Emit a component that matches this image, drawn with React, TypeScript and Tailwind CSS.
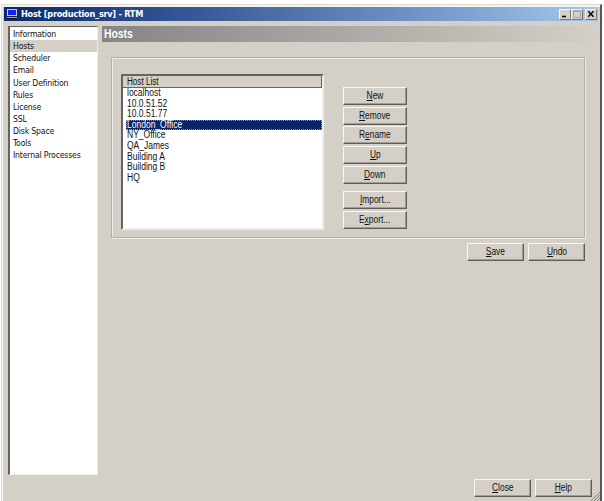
import type { ReactNode } from "react";

const sections = [
  "Information",
  "Hosts",
  "Scheduler",
  "Email",
  "User Definition",
  "Rules",
  "License",
  "SSL",
  "Disk Space",
  "Tools",
  "Internal Processes",
];

const hosts = [
  "localhost",
  "10.0.51.52",
  "10.0.51.77",
  "London_Office",
  "NY_Office",
  "QA_James",
  "Building A",
  "Building B",
  "HQ",
];

const raised =
  "border border-t-[#f8f7f2] border-l-[#f8f7f2] border-b-[#5f5d58] border-r-[#5f5d58] shadow-[inset_-1px_-1px_0_#a09d96] bg-[#d4d0c8]";

function Button({ label, hot = 0, className = "" }: { label: string; hot?: number; className?: string }) {
  return (
    <button
      className={`${raised} flex shrink-0 items-center justify-center whitespace-nowrap text-[10px] leading-[14px] ${className}`}
    >
      <span className="inline-block scale-x-[.84]">
        {label.slice(0, hot)}
        <span className="underline decoration-1 underline-offset-1">{label[hot]}</span>
        {label.slice(hot + 1)}
      </span>
    </button>
  );
}

function CaptionButton({ children, className = "" }: { children: ReactNode; className?: string }) {
  return (
    <button
      className={`flex h-[11px] w-3 items-center justify-center border border-t-[#f8f7f2] border-l-[#f8f7f2] border-r-[#77756f] border-b-[#77756f] bg-[#d4d0c8] ${className}`}
    >
      <svg width="8" height="8" viewBox="0 0 8 8" fill="none">
        {children}
      </svg>
    </button>
  );
}

export default function App() {
  return (
    <div className="h-[501px] w-[604px] overflow-hidden bg-white pt-1 pl-px font-['Liberation_Sans',Arial,sans-serif] text-[#111]">
      <div className="relative flex h-[497px] w-[601px] flex-col border-t border-r-2 border-l border-t-[#dedbd5] border-r-[#56565a] border-l-[#dedbd5] bg-[#d4d0c8]">
        <div className="flex h-full flex-col border-t-2 border-l border-[#f4f3ef] pr-[2px] pl-px">
          <header className="flex h-[14px] shrink-0 items-center bg-linear-to-r from-[#0b276e] to-[#a3c7ed] pl-[2px]">
            <svg width="12" height="12" viewBox="0 0 12 12" shapeRendering="crispEdges">
              <rect x="1" y="1" width="10" height="7" fill="#c5ccd5" />
              <rect x="2" y="2" width="8" height="5" fill="#1020ff" />
              <rect x="3" y="8" width="6" height="1" fill="#222" />
              <rect x="1" y="9" width="10" height="2" fill="#a5a6a4" />
              <rect x="1" y="10" width="10" height="1" fill="#111" />
            </svg>
            <h1 className="ml-[3px] origin-left scale-x-[.955] whitespace-nowrap font-['DejaVu_Sans_Condensed','DejaVu_Sans',sans-serif] text-[9.5px] leading-[14px] font-bold tracking-[-0.25px] text-white">
              Host [production_srv] - RTM
            </h1>
            <div className="ml-auto flex pr-px">
              <CaptionButton>
                <path d="M1 6.5H5" stroke="#000" strokeWidth="1.6" />
              </CaptionButton>
              <CaptionButton>
                <path d="M.5 .5H7.5V7.5H.5Z M.5 1.5H7.5" stroke="#aaa9a2" />
              </CaptionButton>
              <CaptionButton className="ml-[2px]">
                <path d="M1.3 1.2L6.5 6.8M6.5 1.2L1.3 6.8" stroke="#000" strokeWidth="1.4" />
              </CaptionButton>
            </div>
          </header>

          <div className="flex min-h-0 flex-1 pt-[5px] pl-1">
            <nav className="h-[449px] w-[90px] shrink-0 border-t border-r border-b border-l-2 border-t-[#66645f] border-r-[#f1f0ec] border-b-[#f1f0ec] border-l-[#66645f] bg-white pt-[1px] font-['DejaVu_Sans_Condensed','DejaVu_Sans',sans-serif] text-[9px]">
              {sections.map((name) => (
                <div
                  key={name}
                  className={`flex h-[12.15px] items-center pl-[3px] leading-[12px] tracking-[-0.18px] whitespace-nowrap ${name === "Hosts" ? "bg-[#d4d0c8]" : ""}`}
                >
                  <span className="origin-left scale-x-[.96]">{name}</span>
                </div>
              ))}
            </nav>

            <main className="ml-1 flex min-w-0 flex-1 flex-col">
              <h2 className="h-4 shrink-0 bg-linear-to-r from-[#858585] to-[#d4d0c8] pl-[2px] text-[12px] leading-4 font-bold text-white">
                <span className="inline-block origin-left scale-x-[.86]">Hosts</span>
              </h2>

              <fieldset className="mt-[15px] ml-[9px] h-[181px] w-[474px] shrink-0 border border-[#b2afa8] shadow-[1px_1px_0_#efede7,inset_1px_1px_0_#efede7]">
                <div className="flex pt-4 pl-[9px]">
                  <div className="h-[156px] w-[203px] border-t-2 border-r-2 border-b-2 border-l-2 border-t-[#66645f] border-r-[#eeede8] border-b-[#eeede8] border-l-[#66645f] bg-white text-[10px]">
                    <div className="h-[12px] border-r border-b border-[#66645f] bg-[#d4d0c8] pl-[4px] leading-[12px]">
                      <span className="inline-block origin-left scale-x-[.81]">Host List</span>
                    </div>
                    {hosts.map((host) => (
                      <div
                        key={host}
                        className={`ml-[3px] h-[10.6px] pl-px leading-[10.6px] whitespace-nowrap ${host === "London_Office" ? "bg-[#0a246a] text-white outline-1 -outline-offset-1 outline-dotted outline-[#8b96b3]" : ""}`}
                      >
                        <span className="inline-block origin-left scale-x-[.85]">{host}</span>
                      </div>
                    ))}
                  </div>

                  <div className="mt-[13px] ml-[19px] flex flex-col gap-[1.7px]">
                    <Button label="New" className="h-[18px] w-16" />
                    <Button label="Remove" className="h-[18px] w-16" />
                    <Button label="Rename" hot={1} className="h-[18px] w-16" />
                    <Button label="Up" className="h-[18px] w-16" />
                    <Button label="Down" className="h-[18px] w-16" />
                    <Button label="Import..." className="mt-[6px] h-[18px] w-16" />
                    <Button label="Export..." hot={1} className="h-[18px] w-16" />
                  </div>
                </div>
              </fieldset>

              <div className="mt-[5px] flex justify-end gap-1 pr-[13px]">
                <Button label="Save" className="h-[18px] w-[57px]" />
                <Button label="Undo" className="h-[18px] w-[57px]" />
              </div>

              <footer className="mt-auto flex justify-end gap-1 pr-[6px] pb-1">
                <Button label="Close" className="h-[18px] w-[57px]" />
                <Button label="Help" className="h-[18px] w-[57px]" />
              </footer>
            </main>
          </div>
        </div>
        <svg className="absolute right-0 bottom-0" width="10" height="9" viewBox="0 0 10 9" stroke="#88867f" fill="none">
          <path d="M1 9L10 0M4 9L10 3M7 9L10 6" />
        </svg>
      </div>
    </div>
  );
}
